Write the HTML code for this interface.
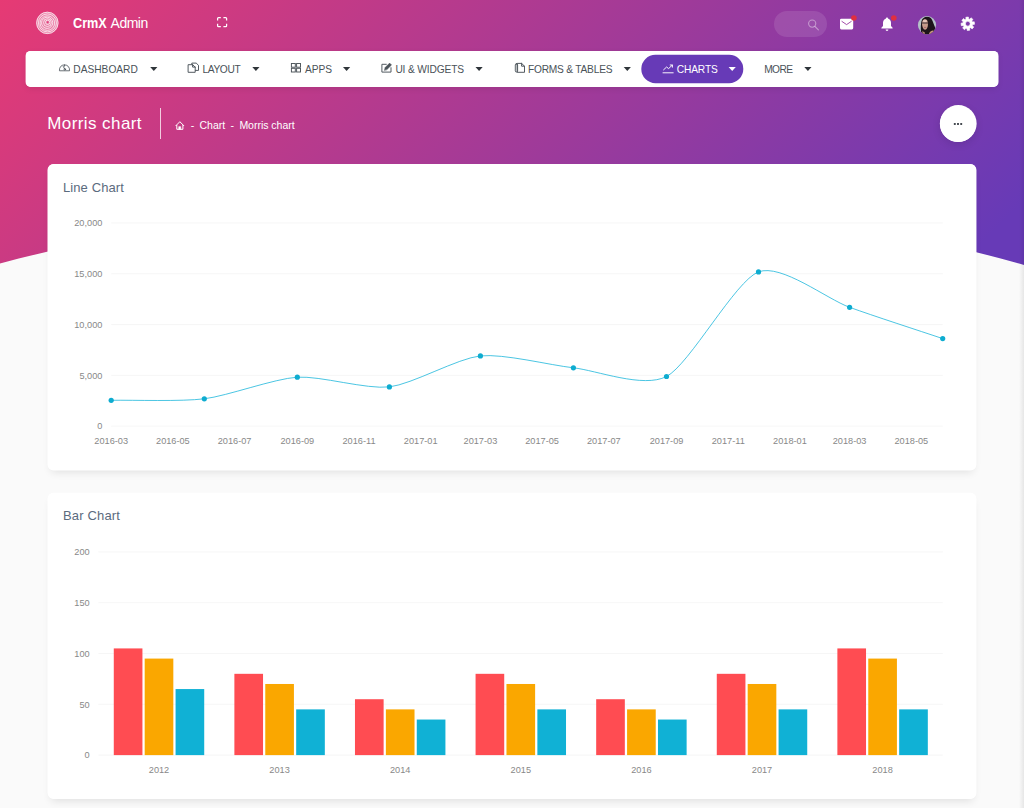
<!DOCTYPE html>
<html lang="en"><head><meta charset="utf-8"><title>CrmX Admin - Morris chart</title>
<style>

html,body{margin:0;padding:0;}
body{width:1024px;height:808px;overflow:hidden;background:#fafafa;font-family:"Liberation Sans", Arial, sans-serif;position:relative;}
.t{position:absolute;white-space:nowrap;line-height:1;font-family:"Liberation Sans", Arial, sans-serif;}
.abs{position:absolute;}
.hdrbg{position:absolute;left:0;top:0;width:1024px;height:266px;background:linear-gradient(135deg,#e63a74 0%,#673ab7 95%);
  clip-path:path('M0,0 H1024 V264.9 C683,169.4 341,174.7 0,263.4 Z');}
.nav{position:absolute;left:26px;top:51px;width:972px;height:36px;border-radius:5px;background:#fff;box-shadow:0 2px 6px rgba(0,0,0,.08);}
.pill{position:absolute;left:642px;top:55px;width:101px;height:28px;border-radius:14px;background:#673ab7;}
.search{position:absolute;left:774px;top:11px;width:52.5px;height:25.5px;border-radius:13px;background:rgba(255,255,255,.11);}
.divider{position:absolute;left:160px;top:108px;width:1px;height:30.5px;background:rgba(255,255,255,.75);}
.more{position:absolute;left:940px;top:105.5px;width:36px;height:36px;border-radius:50%;background:#fff;box-shadow:0 2px 8px rgba(0,0,0,.12);}
.card{position:absolute;left:48px;width:928px;height:306px;border-radius:6px;background:#fff;box-shadow:0 5px 8px -3px rgba(0,0,0,.11);}
.strip{position:absolute;right:0;top:0;width:5px;height:808px;background:linear-gradient(to right,rgba(0,0,0,0),rgba(0,0,0,.08));}
svg.ov{position:absolute;left:0;top:0;}

</style></head><body>
<div class="hdrbg"></div>
<header><div class="search"></div></header>
<nav class="nav"></nav><div class="pill"></div>
<div class="divider"></div><div class="more"></div>
<section class="card" style="top:164px"></section>
<section class="card" style="top:493px"></section>
<svg class="ov" width="1024" height="808" viewBox="0 0 1024 808">
<rect x="25.6" y="50.9" width="972.9" height="36" rx="5" fill="#fff"/>
<rect x="641.3" y="54.8" width="102" height="28.4" rx="14.2" fill="#673ab7"/>
<rect x="47.5" y="163.9" width="928.95" height="306.7" rx="6" fill="#fff"/>
<rect x="47.5" y="492.8" width="928.95" height="305.9" rx="6" fill="#fff"/>
<circle cx="958.25" cy="123.5" r="18.4" fill="#fff"/>
<circle cx="47.35" cy="22.9" r="11.1" fill="#fff" fill-opacity=".36"/>
<g fill="none" stroke="#fff" stroke-opacity=".8" stroke-width="0.9">
<circle cx="47.65" cy="22.30" r="2.2"/>
<circle cx="47.45" cy="22.60" r="3.9"/>
<circle cx="47.15" cy="22.80" r="5.6"/>
<circle cx="47.35" cy="23.10" r="7.3"/>
<circle cx="47.45" cy="22.90" r="9"/>
<circle cx="47.35" cy="22.90" r="10.7"/>
</g>
<circle cx="47.7" cy="22.1" r="0.9" fill="#e0397a"/>
<g fill="none" stroke="#fff" stroke-width="1.25" stroke-linecap="butt" stroke-linejoin="round"><path d="M217.6 20.4 V18.5 Q217.6 17.6 218.5 17.6 H220.8"/><path d="M223.4 17.6 H225.7 Q226.6 17.6 226.6 18.5 V20.4"/><path d="M226.6 23.8 V25.7 Q226.6 26.6 225.7 26.6 H223.4"/><path d="M220.8 26.6 H218.5 Q217.6 26.6 217.6 25.7 V23.8"/></g>
<g fill="none" stroke="#fff" stroke-opacity=".42" stroke-width="1.1" stroke-linecap="round"><circle cx="812.2" cy="23.6" r="3.6"/><path d="M815 26.5 L818.4 29.9"/></g>
<rect x="840" y="18.7" width="13.2" height="10.7" rx="1.3" fill="#fff"/>
<path d="M841.6 21.2 L846.6 24.6 L851.6 21.2" fill="none" stroke="#9a3aa0" stroke-width="0.9"/>
<circle cx="853.9" cy="18" r="2.8" fill="#df2f40"/>
<path d="M887 17.4 c0.6 0 1 0.4 1 1 c2 0.6 3 2.3 3 4.4 v3.3 l1.6 1.7 v0.8 h-11.2 v-0.8 l1.6 -1.7 v-3.3 c0 -2.1 1 -3.8 3 -4.4 c0 -0.6 0.4 -1 1 -1 z" fill="#fff"/>
<path d="M885.6 29.6 h2.8 a1.4 1.4 0 0 1 -2.8 0 z" fill="#fff"/>
<circle cx="893.8" cy="18" r="2.8" fill="#df2f40"/>
<defs><clipPath id="av"><circle cx="927" cy="25.1" r="9.1"/></clipPath></defs>
<g clip-path="url(#av)"><rect x="917" y="15" width="21" height="21" fill="#b4c0c7"/><path d="M921 31.5 C920.6 28 920.8 24 921.4 21.4 C922.2 18.4 924.4 16.8 927 16.8 C929.6 16.8 931 17.8 932 19.8 C933.2 22.4 934.2 25.6 935.6 28.4 L936.4 31 C935 33.4 932 35 929 35 L922 34.4 Z" fill="#1d151a"/><path d="M922 23.6 C921.9 21 923.2 19.2 925 19.2 C927 19.2 928 21 928 23.8 C928 27.4 926.8 29.6 925.2 29.8 C923.4 30 922.1 26.8 922 23.6 Z" fill="#c79c8b"/><ellipse cx="924.9" cy="21" rx="2" ry="1.5" fill="#e6c6ba"/><path d="M921.8 23 h6.4" stroke="#3c2d33" stroke-width="1"/><path d="M924 27.4 h2.2" stroke="#a8606a" stroke-width="0.8"/><path d="M922.4 30.4 C923 31.6 924 32 925 32.4 L924.6 34.6 L922.6 34 Z" fill="#b48573"/><path d="M929 33.6 C930 31.2 932 30.2 933.6 30.6 L933 33.4 L930 34.8 Z" fill="#c4917c"/></g>
<path d="M972.52 22.44 L974.43 22.48 L974.43 25.02 L972.52 25.06 L972.06 26.17 L973.39 27.54 L971.59 29.34 L970.22 28.01 L969.11 28.47 L969.07 30.38 L966.53 30.38 L966.49 28.47 L965.38 28.01 L964.01 29.34 L962.21 27.54 L963.54 26.17 L963.08 25.06 L961.17 25.02 L961.17 22.48 L963.08 22.44 L963.54 21.33 L962.21 19.96 L964.01 18.16 L965.38 19.49 L966.49 19.03 L966.53 17.12 L969.07 17.12 L969.11 19.03 L970.22 19.49 L971.59 18.16 L973.39 19.96 L972.06 21.33 Z M965.40 23.75 a2.40 2.40 0 1 0 4.80 0 a2.40 2.40 0 1 0 -4.80 0 Z" fill="#fff" fill-rule="evenodd" stroke="#fff" stroke-width="0.6" stroke-linejoin="round" transform="rotate(-6 967.8 23.75)"/>
<g stroke="#50575e" stroke-width="0.85" fill="none" stroke-linecap="round" stroke-linejoin="round"><path d="M59.4 70.4 C59.2 67 61.4 64.9 64.5 64.9 C67.6 64.9 69.8 67 69.6 70.4 Z"/><path d="M64.5 64.9 V66.2 M64.8 69.2 L63.2 66.4"/><circle cx="64.8" cy="69.3" r="0.8"/></g>
<g stroke="#4a5258" stroke-width="0.95" fill="none" stroke-linecap="square" stroke-linejoin="miter"><path d="M191.8 64.2 V63.1 H196.2 L198.5 65.3 V70.4 H195.6"/><path d="M188.6 64.7 H192.6 L195.2 67.1 V72.3 H188.6 Z"/><path d="M192.6 64.7 V67.1 H195.2"/></g>
<g stroke="#4a5258" stroke-width="0.95" fill="none" stroke-linecap="square" stroke-linejoin="miter"><rect x="291.4" y="63.5" width="3.9" height="3.7"/><rect x="296.6" y="63.5" width="3.9" height="3.7"/><rect x="291.4" y="68.3" width="3.9" height="3.7"/><rect x="296.6" y="68.3" width="3.9" height="3.7"/></g>
<g stroke="#4a5258" stroke-width="0.95" fill="none" stroke-linecap="square" stroke-linejoin="miter"><path d="M391 67.8 V72.1 H381.9 V64.3 H386.2"/><path d="M384.5 70.1 L385.1 67.6 L389.6 63.1 L391.5 65 L387 69.5 Z" fill="#4a5258" stroke-width="0.5"/></g>
<g stroke="#4a5258" stroke-width="0.95" fill="none" stroke-linecap="square" stroke-linejoin="miter"><path d="M517.6 63.4 H521.6 L524.5 66.2 V72.3 H517.6 Z"/><path d="M521.6 63.4 V66.2 H524.5"/><rect x="515.3" y="63.8" width="2.3" height="8.2" rx="1.1" stroke-width="0.9"/></g>
<g stroke="#fff" stroke-width="0.95" fill="none" stroke-linecap="round" stroke-linejoin="round"><path d="M663 72.8 H673.2"/><path d="M663.6 69.8 L666.6 67 L668.6 68.6 L672.2 65.2"/><path d="M670.2 65 H672.4 V67.2"/></g>
<path d="M150.20 67 h7.2 l-3.6 4 z" fill="#2f353a"/>
<path d="M252.30 67 h7.2 l-3.6 4 z" fill="#2f353a"/>
<path d="M343.00 67 h7.2 l-3.6 4 z" fill="#2f353a"/>
<path d="M475.50 67 h7.2 l-3.6 4 z" fill="#2f353a"/>
<path d="M623.70 67 h7.2 l-3.6 4 z" fill="#2f353a"/>
<path d="M804.30 67 h7.2 l-3.6 4 z" fill="#2f353a"/>
<path d="M728.60 67 h7.2 l-3.6 4 z" fill="#fff"/>
<g stroke="#fff" stroke-width="1" fill="none" stroke-linejoin="round" stroke-linecap="round"><path d="M175.9 125.7 L179.85 121.7 L183.8 125.7"/><path d="M176.8 125.4 V129.3 H182.9 V125.4"/><rect x="179" y="126.7" width="1.7" height="2.6" fill="#fff" stroke-width="0.6"/></g>
<rect x="953.80" y="122.9" width="2" height="2" rx=".4" fill="#454a50"/>
<rect x="957.00" y="122.9" width="2" height="2" rx=".4" fill="#454a50"/>
<rect x="960.20" y="122.9" width="2" height="2" rx=".4" fill="#454a50"/>
<line x1="111.2" x2="942.8" y1="222.95" y2="222.95" stroke="#f4f4f4" stroke-width="0.8"/>
<line x1="111.2" x2="942.8" y1="273.75" y2="273.75" stroke="#f4f4f4" stroke-width="0.8"/>
<line x1="111.2" x2="942.8" y1="324.55" y2="324.55" stroke="#f4f4f4" stroke-width="0.8"/>
<line x1="111.2" x2="942.8" y1="375.35" y2="375.35" stroke="#f4f4f4" stroke-width="0.8"/>
<line x1="111.2" x2="942.8" y1="426.15" y2="426.15" stroke="#f4f4f4" stroke-width="0.8"/>
<path d="M111.20,400.30C134.47,399.93,181.03,401.69,204.30,398.80C227.55,395.91,274.05,378.69,297.30,377.20C320.32,375.72,366.38,389.58,389.40,386.90C412.15,384.25,457.65,358.26,480.40,355.90C503.65,353.49,550.15,365.23,573.40,367.80C596.67,370.38,643.23,388.56,666.50,376.50C689.50,364.58,735.50,280.59,758.50,271.90C781.27,263.29,826.83,299.05,849.60,307.30C872.88,315.73,919.43,330.78,942.70,338.60" fill="none" stroke="#1db6db" stroke-width="0.8"/>
<circle cx="111.20" cy="400.30" r="2.6" fill="#0eacd0"/>
<circle cx="204.30" cy="398.80" r="2.6" fill="#0eacd0"/>
<circle cx="297.30" cy="377.20" r="2.6" fill="#0eacd0"/>
<circle cx="389.40" cy="386.90" r="2.6" fill="#0eacd0"/>
<circle cx="480.40" cy="355.90" r="2.6" fill="#0eacd0"/>
<circle cx="573.40" cy="367.80" r="2.6" fill="#0eacd0"/>
<circle cx="666.50" cy="376.50" r="2.6" fill="#0eacd0"/>
<circle cx="758.50" cy="271.90" r="2.6" fill="#0eacd0"/>
<circle cx="849.60" cy="307.30" r="2.6" fill="#0eacd0"/>
<circle cx="942.70" cy="338.60" r="2.6" fill="#0eacd0"/>
<line x1="98.4" x2="942.8" y1="551.90" y2="551.90" stroke="#f4f4f4" stroke-width="0.8"/>
<line x1="98.4" x2="942.8" y1="602.70" y2="602.70" stroke="#f4f4f4" stroke-width="0.8"/>
<line x1="98.4" x2="942.8" y1="653.50" y2="653.50" stroke="#f4f4f4" stroke-width="0.8"/>
<line x1="98.4" x2="942.8" y1="704.30" y2="704.30" stroke="#f4f4f4" stroke-width="0.8"/>
<line x1="98.4" x2="942.8" y1="755.10" y2="755.10" stroke="#f4f4f4" stroke-width="0.8"/>
<rect x="113.78" y="648.42" width="28.65" height="106.68" fill="#ff4c52"/>
<rect x="144.68" y="658.58" width="28.65" height="96.52" fill="#faa700"/>
<rect x="175.57" y="689.06" width="28.65" height="66.04" fill="#10b1d5"/>
<rect x="234.38" y="673.82" width="28.65" height="81.28" fill="#ff4c52"/>
<rect x="265.27" y="683.98" width="28.65" height="71.12" fill="#faa700"/>
<rect x="296.18" y="709.38" width="28.65" height="45.72" fill="#10b1d5"/>
<rect x="354.97" y="699.22" width="28.65" height="55.88" fill="#ff4c52"/>
<rect x="385.87" y="709.38" width="28.65" height="45.72" fill="#faa700"/>
<rect x="416.77" y="719.54" width="28.65" height="35.56" fill="#10b1d5"/>
<rect x="475.57" y="673.82" width="28.65" height="81.28" fill="#ff4c52"/>
<rect x="506.47" y="683.98" width="28.65" height="71.12" fill="#faa700"/>
<rect x="537.37" y="709.38" width="28.65" height="45.72" fill="#10b1d5"/>
<rect x="596.18" y="699.22" width="28.65" height="55.88" fill="#ff4c52"/>
<rect x="627.08" y="709.38" width="28.65" height="45.72" fill="#faa700"/>
<rect x="657.98" y="719.54" width="28.65" height="35.56" fill="#10b1d5"/>
<rect x="716.78" y="673.82" width="28.65" height="81.28" fill="#ff4c52"/>
<rect x="747.68" y="683.98" width="28.65" height="71.12" fill="#faa700"/>
<rect x="778.58" y="709.38" width="28.65" height="45.72" fill="#10b1d5"/>
<rect x="837.38" y="648.42" width="28.65" height="106.68" fill="#ff4c52"/>
<rect x="868.27" y="658.58" width="28.65" height="96.52" fill="#faa700"/>
<rect x="899.17" y="709.38" width="28.65" height="45.72" fill="#10b1d5"/>
</svg>
<span class="t " style="left:73.40px;top:16.00px;font-size:14px;color:#fff;font-weight:700;display:inline-block;transform-origin:0 0;transform:scaleX(0.9051);">CrmX</span>
<span class="t " style="left:110.60px;top:16.00px;font-size:14px;color:#fff;letter-spacing:-0.521px;">Admin</span>
<span class="t " style="left:73.30px;top:65.00px;font-size:10.2px;color:#4a5258;letter-spacing:-0.002px;">DASHBOARD</span>
<span class="t " style="left:202.40px;top:65.00px;font-size:10.2px;color:#4a5258;letter-spacing:-0.351px;">LAYOUT</span>
<span class="t " style="left:305.10px;top:65.00px;font-size:10.2px;color:#4a5258;letter-spacing:-0.038px;">APPS</span>
<span class="t " style="left:395.40px;top:65.00px;font-size:10.2px;color:#4a5258;letter-spacing:-0.143px;">UI &amp; WIDGETS</span>
<span class="t " style="left:528.00px;top:65.00px;font-size:10.2px;color:#4a5258;letter-spacing:-0.221px;">FORMS &amp; TABLES</span>
<span class="t " style="left:676.70px;top:65.00px;font-size:10.2px;color:#fff;letter-spacing:-0.110px;">CHARTS</span>
<span class="t " style="left:764.20px;top:65.00px;font-size:10.2px;color:#4a5258;letter-spacing:-0.567px;">MORE</span>
<span class="t " style="left:47.20px;top:115.00px;font-size:17px;color:#fff;letter-spacing:0.424px;">Morris chart</span>
<span class="t " style="left:190.80px;top:120.00px;font-size:10.5px;color:#fff;">-</span>
<span class="t " style="left:199.40px;top:120.00px;font-size:10.5px;color:#fff;letter-spacing:0.056px;">Chart</span>
<span class="t " style="left:230.60px;top:120.00px;font-size:10.5px;color:#fff;">-</span>
<span class="t " style="left:239.40px;top:120.00px;font-size:10.5px;color:#fff;letter-spacing:-0.020px;">Morris chart</span>
<span class="t " style="left:62.90px;top:181.00px;font-size:13px;color:#5b6b7e;letter-spacing:0.113px;">Line Chart</span>
<span class="t " style="left:62.90px;top:509.00px;font-size:13px;color:#5b6b7e;letter-spacing:0.171px;">Bar Chart</span>
<span class="t " style="left:74.26px;top:219.00px;font-size:9.2px;color:#888888;">20,000</span>
<span class="t " style="left:74.26px;top:270.00px;font-size:9.2px;color:#888888;">15,000</span>
<span class="t " style="left:74.26px;top:321.00px;font-size:9.2px;color:#888888;">10,000</span>
<span class="t " style="left:79.38px;top:372.00px;font-size:9.2px;color:#888888;">5,000</span>
<span class="t " style="left:97.28px;top:422.00px;font-size:9.2px;color:#888888;">0</span>
<span class="t " style="left:94.32px;top:437.00px;font-size:9.2px;color:#888888;">2016-03</span>
<span class="t " style="left:156.02px;top:437.00px;font-size:9.2px;color:#888888;">2016-05</span>
<span class="t " style="left:217.73px;top:437.00px;font-size:9.2px;color:#888888;">2016-07</span>
<span class="t " style="left:280.44px;top:437.00px;font-size:9.2px;color:#888888;">2016-09</span>
<span class="t " style="left:342.49px;top:437.00px;font-size:9.2px;color:#888888;">2016-11</span>
<span class="t " style="left:403.85px;top:437.00px;font-size:9.2px;color:#888888;">2017-01</span>
<span class="t " style="left:463.54px;top:437.00px;font-size:9.2px;color:#888888;">2017-03</span>
<span class="t " style="left:525.24px;top:437.00px;font-size:9.2px;color:#888888;">2017-05</span>
<span class="t " style="left:586.95px;top:437.00px;font-size:9.2px;color:#888888;">2017-07</span>
<span class="t " style="left:649.66px;top:437.00px;font-size:9.2px;color:#888888;">2017-09</span>
<span class="t " style="left:711.71px;top:437.00px;font-size:9.2px;color:#888888;">2017-11</span>
<span class="t " style="left:773.07px;top:437.00px;font-size:9.2px;color:#888888;">2018-01</span>
<span class="t " style="left:832.75px;top:437.00px;font-size:9.2px;color:#888888;">2018-03</span>
<span class="t " style="left:894.46px;top:437.00px;font-size:9.2px;color:#888888;">2018-05</span>
<span class="t " style="left:74.35px;top:548.00px;font-size:9.2px;color:#888888;">200</span>
<span class="t " style="left:74.35px;top:599.00px;font-size:9.2px;color:#888888;">150</span>
<span class="t " style="left:74.35px;top:650.00px;font-size:9.2px;color:#888888;">100</span>
<span class="t " style="left:79.47px;top:701.00px;font-size:9.2px;color:#888888;">50</span>
<span class="t " style="left:84.58px;top:751.00px;font-size:9.2px;color:#888888;">0</span>
<span class="t " style="left:148.77px;top:766.00px;font-size:9.2px;color:#888888;">2012</span>
<span class="t " style="left:269.37px;top:766.00px;font-size:9.2px;color:#888888;">2013</span>
<span class="t " style="left:389.97px;top:766.00px;font-size:9.2px;color:#888888;">2014</span>
<span class="t " style="left:510.57px;top:766.00px;font-size:9.2px;color:#888888;">2015</span>
<span class="t " style="left:631.17px;top:766.00px;font-size:9.2px;color:#888888;">2016</span>
<span class="t " style="left:751.77px;top:766.00px;font-size:9.2px;color:#888888;">2017</span>
<span class="t " style="left:872.37px;top:766.00px;font-size:9.2px;color:#888888;">2018</span>
<div class="strip"></div>
</body></html>
